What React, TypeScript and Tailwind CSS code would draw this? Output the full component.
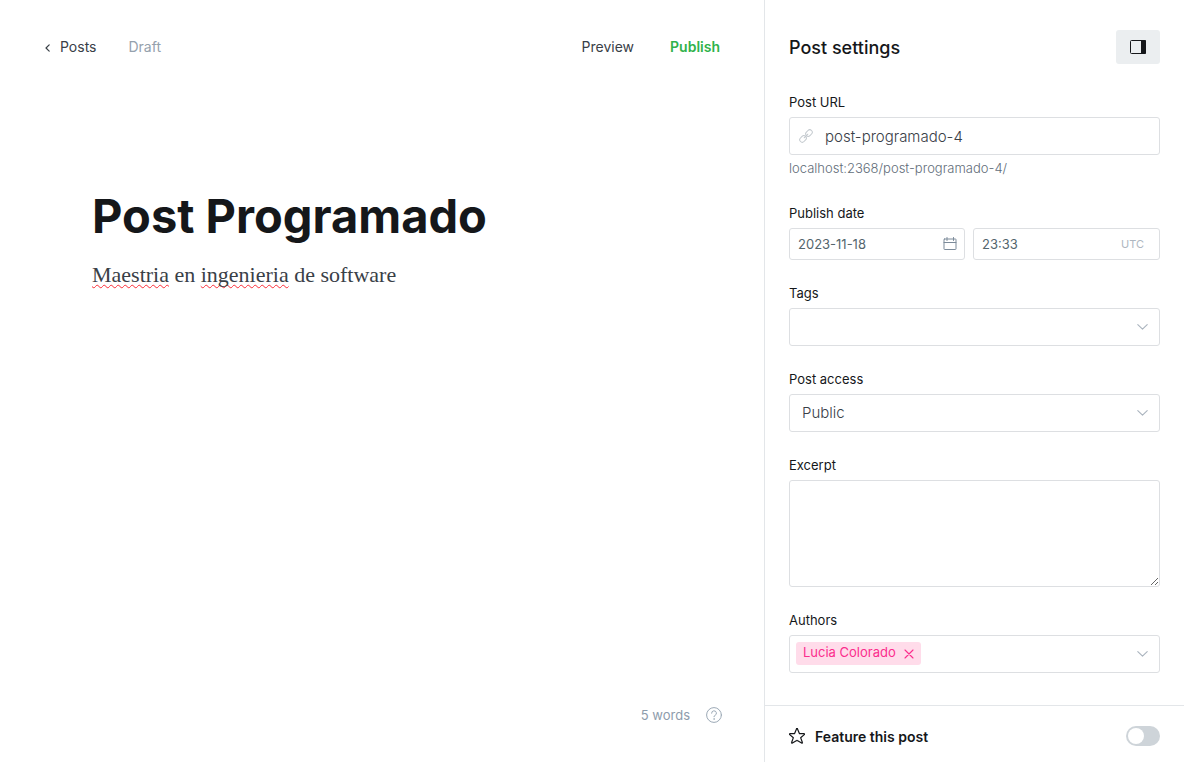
import { useState } from 'react';
import type { ReactNode } from 'react';

function ChevronDown() {
  return (
    <svg aria-hidden="true" viewBox="0 0 12 8" className="h-2 w-3 shrink-0 fill-none stroke-[#aab4be]" strokeWidth="1.1" strokeLinecap="round" strokeLinejoin="round">
      <path d="M1.8 1.6 6.5 6.2 11.2 1.6" />
    </svg>
  );
}

function LinkIcon() {
  return (
    <svg aria-hidden="true" viewBox="0 0 14 14" className="size-3.5 shrink-0 fill-none stroke-[#c3c9ce]" strokeLinecap="round">
      <g transform="rotate(-45 7 7)">
        <rect x="-.8" y="4.5" width="7.2" height="5" rx="2.5" />
        <rect x="7.6" y="4.5" width="7.2" height="5" rx="2.5" />
        <path d="M4.4 7h5.2" />
      </g>
    </svg>
  );
}

function CalendarIcon() {
  return (
    <svg aria-hidden="true" viewBox="0 0 14 14" className="size-3.5 shrink-0 fill-none stroke-[#7c8b9a]" strokeLinecap="round" strokeLinejoin="round">
      <rect x="1" y="2" width="12" height="10.5" rx="0.6" />
      <path d="M1 5.5h12M4 .5v3M10.5.5v3" />
    </svg>
  );
}

function StarIcon() {
  return (
    <svg aria-hidden="true" viewBox="0 0 16 16" className="size-4 shrink-0 fill-none stroke-[#15171a]" strokeWidth="1.2" strokeLinejoin="round">
      <path d="M8.5.9 10.4 5.4a.5.5 0 0 0 .5.3h4.1c.5 0 .7.6.3.9l-3.4 2.9a.5.5 0 0 0-.1.6l1.6 4.4c.2.5-.3.9-.8.6L8.3 12.6a.5.5 0 0 0-.6 0l-4.3 2.5c-.5.3-1-.1-.8-.6l1.6-4.4a.5.5 0 0 0-.1-.6L.7 6.6c-.4-.3-.2-.9.3-.9h4.1a.5.5 0 0 0 .5-.3L7.5.9a.5.5 0 0 1 1 0Z" />
    </svg>
  );
}

function Field({ id, label, children }: { id: string; label: string; children: ReactNode }) {
  return (
    <div className="flex flex-col">
      <label htmlFor={id} className="mb-[5px] pt-px text-[13px] leading-5 text-[#15171a]">
        {label}
      </label>
      {children}
    </div>
  );
}

export default function App() {
  const [slug, setSlug] = useState('post-programado-4');
  const [date, setDate] = useState('2023-11-18');
  const [time, setTime] = useState('23:33');
  const [featured, setFeatured] = useState(false);

  return (
    <div className="flex min-h-screen bg-white font-['Inter',sans-serif] text-[#394047]">
      <main className="flex min-w-0 flex-1 flex-col">
        <header className="flex items-center justify-between px-11 py-8 text-sm">
          <div className="flex items-center gap-8 leading-[30px]">
            <a href="#posts" className="flex items-center gap-2">
              <svg aria-hidden="true" viewBox="0 0 8 10" className="mt-0.5 h-2.5 w-2 fill-none stroke-[#394047]" strokeWidth="1.2" strokeLinecap="round" strokeLinejoin="round">
                <path d="M5.2 1.8 2 5l3.2 3.2" />
              </svg>
              Posts
            </a>
            <span className="text-[#95a1ad]">Draft</span>
          </div>
          <div className="flex items-center gap-9 leading-[30px]">
            <button type="button">Preview</button>
            <button type="button" className="font-semibold text-[#30b24a]">Publish</button>
          </div>
        </header>

        <article className="flex-1 px-[92px] pt-[94px]">
          <h1 className="text-[47px] leading-[56px] font-bold text-[#15171a]">Post Programado</h1>
          <p className="mt-[15px] font-['Liberation_Serif',serif] text-[22px] leading-8">
            <span className="underline decoration-red-500 decoration-wavy decoration-1 underline-offset-2">Maestria</span> en{' '}
            <span className="underline decoration-red-500 decoration-wavy decoration-1 underline-offset-2 [text-decoration-skip-ink:none]">ingenieria</span> de software
          </p>
        </article>

        <footer className="flex items-center justify-end gap-4 px-[42px] pb-[37px] text-[13px] leading-5 text-[#8e9cac]">
          <span>5 words</span>
          <button type="button" aria-label="Help">
            <svg aria-hidden="true" viewBox="0 0 16 16" className="size-4 fill-none stroke-[#9ca9b6]" strokeLinecap="round" strokeLinejoin="round">
              <circle cx="8" cy="8" r="7.4" />
              <path d="M5.6 6.2a2.4 2.4 0 1 1 3.4 2.2c-.7.3-1 .7-1 1.3" />
              <circle cx="8" cy="12" r=".25" />
            </svg>
          </button>
        </footer>
      </main>

      <aside className="flex w-[420px] shrink-0 flex-col border-l border-[#e3e6e9]">
        <div className="flex items-center justify-between px-6 pt-[30px] pb-[27px]">
          <h2 className="pt-0.5 text-lg font-medium text-[#15171a]">Post settings</h2>
          <button type="button" aria-label="Toggle settings" className="flex h-[34px] w-11 items-center justify-center rounded-[3px] bg-[#ebeef0]">
            <svg aria-hidden="true" viewBox="0 0 16 14" className="h-3.5 w-4">
              <rect x="0.5" y="0.5" width="15" height="13" rx="1" className="fill-none stroke-[#15171a]" />
              <path d="M11 0h4a1 1 0 0 1 1 1v12a1 1 0 0 1-1 1h-4Z" className="fill-[#15171a]" />
            </svg>
          </button>
        </div>

        <form className="flex flex-1 flex-col gap-[22px] px-6 pb-8">
          <Field id="url" label="Post URL">
            <div className="flex h-[38px] items-center gap-3 rounded-[3px] border border-[#dddfe2] px-[9px]">
              <LinkIcon />
              <input id="url" value={slug} onChange={(e) => setSlug(e.target.value)} className="min-w-0 flex-1 pt-0.5 text-[15px] font-light outline-none" />
            </div>
            <p className="mt-0.5 pb-px text-[13px] leading-[22px] font-light text-[#626d79]">localhost:2368/{slug}/</p>
          </Field>

          <Field id="date" label="Publish date">
            <div className="flex gap-2 text-[13px] text-[#54666d]">
              <div className="flex h-8 w-44 items-center rounded-[3px] border border-[#dddfe2] pr-[7px] pl-2">
                <input id="date" value={date} onChange={(e) => setDate(e.target.value)} className="min-w-0 flex-1 pt-0.5 outline-none" />
                <CalendarIcon />
              </div>
              <div className="flex h-8 min-w-0 flex-1 items-center rounded-[3px] border border-[#dddfe2] pr-[15px] pl-2">
                <input aria-label="Publish time" value={time} onChange={(e) => setTime(e.target.value)} className="min-w-0 flex-1 pt-0.5 outline-none" />
                <span className="text-[11px] text-[#aeb7c1]">UTC</span>
              </div>
            </div>
          </Field>

          <Field id="tags" label="Tags">
            <div className="flex h-[38px] items-center rounded-[3px] border border-[#dddfe2] px-[11px]">
              <input id="tags" role="combobox" aria-expanded="false" aria-controls="tags" className="min-w-0 flex-1 text-[15px] outline-none" />
              <ChevronDown />
            </div>
          </Field>

          <Field id="access" label="Post access">
            <div className="grid h-[38px] items-center rounded-[3px] border border-[#dddfe2]">
              <select id="access" className="col-start-1 row-start-1 h-full w-full appearance-none bg-transparent px-3 text-[15px] font-light outline-none">
                <option>Public</option>
                <option>Members only</option>
                <option>Paid-members only</option>
              </select>
              <span className="pointer-events-none col-start-1 row-start-1 mr-[11px] justify-self-end">
                <ChevronDown />
              </span>
            </div>
          </Field>

          <Field id="excerpt" label="Excerpt">
            <textarea id="excerpt" className="h-[107px] w-full resize-y rounded-[3px] border border-[#dddfe2] px-3 py-2 text-[15px] outline-none" />
          </Field>

          <Field id="authors" label="Authors">
            <div className="flex h-[38px] items-center rounded-[3px] border border-[#dddfe2] pr-[11px] pl-1.5">
              <span className="mb-0.5 flex h-[23px] items-center gap-2 rounded-[3px] bg-[#ffdcea] px-[7px] text-[13px] text-[#fb2d8d]">
                Lucia Colorado
                <button type="button" aria-label="Remove Lucia Colorado">
                  <svg aria-hidden="true" viewBox="0 0 10 10" className="mt-0.5 size-2.5 fill-none stroke-[#fb2d8d]" strokeWidth="1.1" strokeLinecap="round">
                    <path d="m1 1 8 8M9 1 1 9" />
                  </svg>
                </button>
              </span>
              <input id="authors" className="min-w-0 flex-1 text-[15px] outline-none" />
              <ChevronDown />
            </div>
          </Field>
        </form>

        <div className="flex items-center justify-between border-t border-[#e3e6e9] px-6 pt-5 pb-4">
          <label htmlFor="featured" className="flex h-5 items-center gap-2.5 text-sm font-semibold text-[#15171a]">
            <StarIcon />
            <span className="pt-0.5">Feature this post</span>
          </label>
          <input
            id="featured"
            type="checkbox"
            role="switch"
            checked={featured}
            onChange={(e) => setFeatured(e.target.checked)}
            className="h-5 w-[34px] appearance-none rounded-full bg-[#ced4d9] p-0.5 before:block before:size-4 before:rounded-full before:bg-white checked:bg-[#30b24a] checked:before:translate-x-3.5"
          />
        </div>
      </aside>
    </div>
  );
}
